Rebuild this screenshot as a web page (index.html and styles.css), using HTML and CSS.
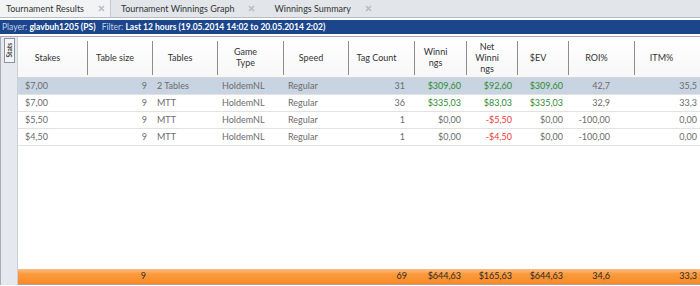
FILE: index.html
```
<!DOCTYPE html>
<html lang="en">
<head>
    <meta charset="UTF-8">
    <title>Tournament Results</title>
    <link rel="stylesheet" href="styles.css">
</head>
<body>

    <div class="tabs">
        <div class="tab active">Tournament Results
            <svg class="close" width="7" height="7" viewBox="0 0 7 7"><path d="M1 1L6 6M6 1L1 6"/></svg>
        </div>
        <div class="tab">Tournament Winnings Graph
            <svg class="close" width="7" height="7" viewBox="0 0 7 7"><path d="M1 1L6 6M6 1L1 6"/></svg>
        </div>
        <div class="tab">Winnings Summary
            <svg class="close" width="7" height="7" viewBox="0 0 7 7"><path d="M1 1L6 6M6 1L1 6"/></svg>
        </div>
    </div>

    <div class="infobar">
        <span class="lbl">Player:</span> <span class="val">glavbuh1205 (PS)</span>
        <span class="lbl filter">Filter:</span> <span class="val">Last 12 hours (19.05.2014 14:02 to 20.05.2014 2:02)</span>
    </div>

    <div class="main">
        <div class="sidebar">
            <div class="stats-tab"><span>Stats</span></div>
        </div>

        <div class="grid">
            <!-- header -->
            <div class="row head">
                <div>Stakes</div>
                <div>Table size</div>
                <div>Tables</div>
                <div>Game<br>Type</div>
                <div>Speed</div>
                <div>Tag Count</div>
                <div>Winni<br>ngs</div>
                <div>Net<br>Winni<br>ngs</div>
                <div>$EV</div>
                <div>ROI%</div>
                <div>ITM%</div>
            </div>

            <div class="body">
                <div class="row selected">
                    <div>$7,00</div>
                    <div class="num">9</div>
                    <div>2 Tables</div>
                    <div>HoldemNL</div>
                    <div>Regular</div>
                    <div class="num">31</div>
                    <div class="num pos">$309,60</div>
                    <div class="num pos">$92,60</div>
                    <div class="num pos">$309,60</div>
                    <div class="num">42,7</div>
                    <div class="num">35,5</div>
                </div>
                <div class="row">
                    <div>$7,00</div>
                    <div class="num">9</div>
                    <div>MTT</div>
                    <div>HoldemNL</div>
                    <div>Regular</div>
                    <div class="num">36</div>
                    <div class="num pos">$335,03</div>
                    <div class="num pos">$83,03</div>
                    <div class="num pos">$335,03</div>
                    <div class="num">32,9</div>
                    <div class="num">33,3</div>
                </div>
                <div class="row">
                    <div>$5,50</div>
                    <div class="num">9</div>
                    <div>MTT</div>
                    <div>HoldemNL</div>
                    <div>Regular</div>
                    <div class="num">1</div>
                    <div class="num">$0,00</div>
                    <div class="num neg">-$5,50</div>
                    <div class="num">$0,00</div>
                    <div class="num">-100,00</div>
                    <div class="num">0,00</div>
                </div>
                <div class="row">
                    <div>$4,50</div>
                    <div class="num">9</div>
                    <div>MTT</div>
                    <div>HoldemNL</div>
                    <div>Regular</div>
                    <div class="num">1</div>
                    <div class="num">$0,00</div>
                    <div class="num neg">-$4,50</div>
                    <div class="num">$0,00</div>
                    <div class="num">-100,00</div>
                    <div class="num">0,00</div>
                </div>
            </div>

            <!-- totals -->
            <div class="row foot">
                <div></div>
                <div class="num">9</div>
                <div></div>
                <div></div>
                <div></div>
                <div class="num">69</div>
                <div class="num">$644,63</div>
                <div class="num">$165,63</div>
                <div class="num">$644,63</div>
                <div class="num">34,6</div>
                <div class="num">33,3</div>
            </div>
        </div>
    </div>

</body>
</html>
```

FILE: styles.css
```
body {
    font-family: Lato, "Open Sans", sans-serif;
    font-size: 9px;
    margin: 0;
    padding: 0;
    width: 700px;
    height: 286px;
    overflow: hidden;
    background-color: #fff;
    color: #333;
}

/* tab strip */
.tabs {
    display: flex;
    height: 17px;
    background-color: #e2e6ea;
    border-bottom: 1px solid #b9bec4;
}

.tab {
    display: flex;
    align-items: center;
    padding: 0 9px 0 10px;
    gap: 14px;
    color: #333;
    font-size: 9px;
}

.tab.active {
    padding: 0 5px 0 6px;
    background-color: #f1f3f5;
    border-right: 1px solid #c4c8cc;
}

.close path {
    stroke: #b9bdc1;
    stroke-width: 1.6;
}

/* player / filter bar */
.infobar {
    margin-top: 2px;
    height: 14px;
    line-height: 14px;
    background-color: #1b468c;
    color: #fff;
    padding-left: 2px;
    font-size: 8.5px;
    white-space: nowrap;
}

.infobar .lbl {
    color: #c3d2e8;
}

.infobar .val {
    font-weight: bold;
}

.infobar .filter {
    margin-left: 4px;
}

/* main area */
.main {
    display: flex;
    margin-top: 2px;
    height: 248px;
    border-top: 1px solid #a9adb2;
}

.sidebar {
    flex: none;
    width: 18px;
    background-color: #e5e8ee;
    border-left: 1px solid #a8adb4;
    border-right: 1px solid #ccd0d6;
    padding: 1px 0 0 3px;
    box-sizing: border-box;
}

.stats-tab {
    width: 9px;
    height: 23px;
    background-color: #f3f5f8;
    border: 1px solid #8d949c;
    display: flex;
    align-items: center;
    justify-content: center;
}

.stats-tab span {
    writing-mode: vertical-rl;
    transform: rotate(180deg);
    font-size: 6.5px;
    font-weight: bold;
    color: #444;
}

.grid {
    flex: 1;
    display: flex;
    flex-direction: column;
}

.row {
    display: grid;
    grid-template-columns: 70px 65px 65px 66px 65px 66px 52px 51px 51px 66px 64px;
    height: 17px;
    line-height: 16px;
    border-bottom: 1px solid #e2e2e2;
    box-sizing: border-box;
    color: #6b6b6b;
}

.row > div {
    padding-left: 6px;
    padding-right: 6px;
    white-space: nowrap;
    overflow: hidden;
}

.row .num {
    text-align: right;
}

.row > div:nth-child(1) {
    padding-left: 7px;
}

.row > div:nth-child(3),
.row > div:nth-child(4),
.row > div:nth-child(5) {
    padding-left: 4px;
}

.row > div:nth-child(6) {
    padding-right: 10px;
}

.row > div:nth-child(10) {
    padding-right: 25px;
}

.row > div:nth-child(11) {
    padding-right: 2px;
}

.row.selected {
    background-color: #c9d4e2;
}

.pos {
    color: #2e8b30;
}

.neg {
    color: #f23a3a;
}

/* header */
.row.head {
    height: 41px;
    line-height: 11px;
    color: #333;
    background: linear-gradient(#fff, #f7f7f7);
    border-bottom: 1px solid #d6d6d6;
}

.row.head > div {
    display: flex;
    align-items: center;
    justify-content: center;
    text-align: center;
    padding: 0 11px 0 0;
    background: linear-gradient(#8c8c8c, #8c8c8c) right 4px / 1px 34px no-repeat;
}

.row.head > div:last-child {
    background: none;
}

.body {
    flex: 1;
}

/* totals */
.row.foot {
    height: 16px;
    line-height: 14px;
    color: #2a2a2a;
    background: linear-gradient(#fdbd85, #fb9a3c 35%, #f98a26);
    border-bottom: 1px solid #a6a6a6;
}

.row.foot > div:nth-child(2) {
    padding-right: 7px;
}

.row.foot > div:nth-child(6) {
    padding-right: 8px;
}
```
